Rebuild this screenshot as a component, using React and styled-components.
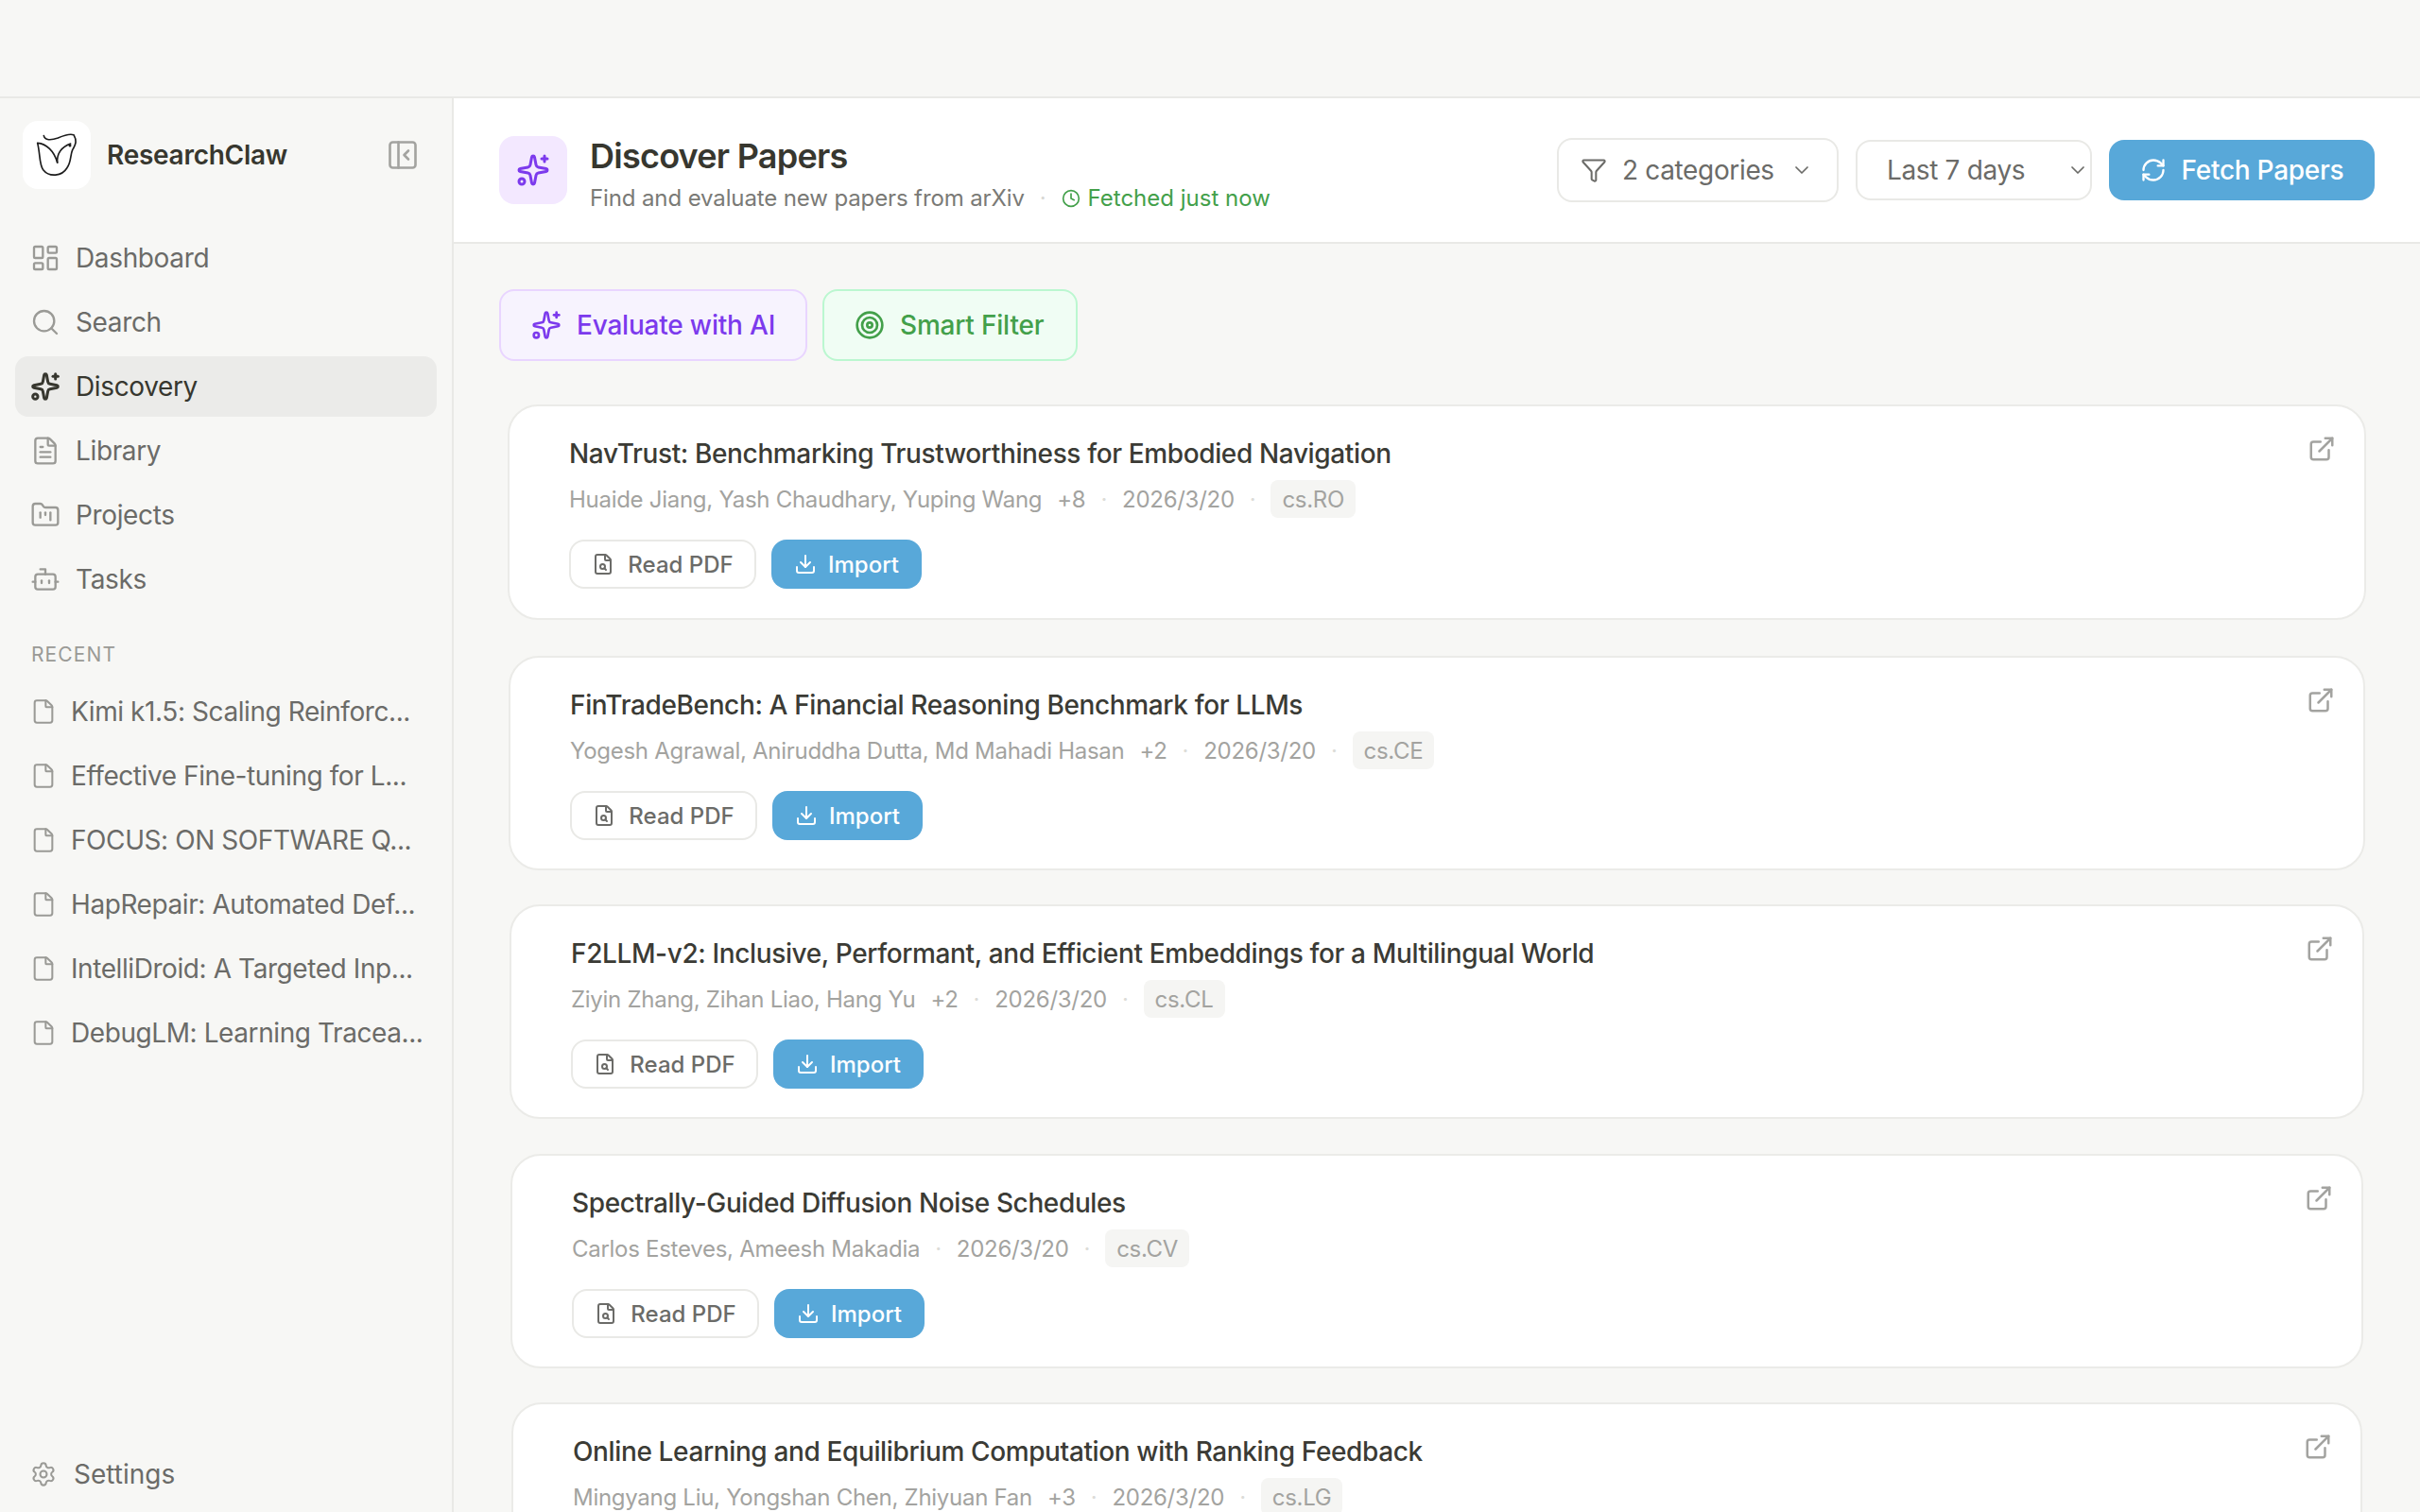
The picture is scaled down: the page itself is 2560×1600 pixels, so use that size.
import styled, { createGlobalStyle } from "styled-components";
import {
  LayoutDashboard,
  Search,
  Sparkles,
  FileText,
  FolderKanban,
  Bot,
  File,
  Settings,
  PanelLeftClose,
  Filter,
  ChevronDown,
  RefreshCw,
  Clock,
  Target,
  FileSearch,
  Download,
  ExternalLink,
} from "lucide-react";

const GlobalStyle = createGlobalStyle`
  html, body {
    margin: 0;
    padding: 0;
    height: 100%;
    overflow: hidden;
    background: #f7f7f5;
    font-family: Inter, "Liberation Sans", sans-serif;
  }
  * { box-sizing: border-box; }
`;

const Page = styled.div`
  height: 1600px;
  display: flex;
  flex-direction: column;
  overflow: hidden;
`;

const TitleBar = styled.div`
  height: 104px;
  flex: none;
  border-bottom: 2px solid #e9e9e6;
`;

const Body = styled.div`
  flex: 1;
  display: flex;
  min-height: 0;
`;

const Sidebar = styled.aside`
  width: 480px;
  flex: none;
  border-right: 2px solid #e9e9e6;
  display: flex;
  flex-direction: column;
  padding: 24px 16px 0;
`;

const Brand = styled.div`
  display: flex;
  align-items: center;
  height: 72px;
  padding-left: 8px;
  margin-bottom: 41px;
`;

const LogoBox = styled.div`
  width: 72px;
  height: 72px;
  border-radius: 16px;
  background: #fff;
  display: flex;
  margin-right: 17px;
`;

const BrandName = styled.div`
  flex: 1;
  font-size: 28px;
  font-weight: 600;
  letter-spacing: -0.27px;
  color: #37372f;
`;

const CollapseIcon = styled.div`
  display: flex;
  color: #a3a3a0;
  margin-right: 18px;
`;

const NavList = styled.nav`
  display: flex;
  flex-direction: column;
  gap: 4px;
`;

const NavItem = styled.div`
  height: 64px;
  display: flex;
  align-items: center;
  gap: 16px;
  padding-left: 16px;
  border-radius: 14px;
  font-size: 28px;
  letter-spacing: -0.36px;
  color: ${(p) => (p.$active ? "#37372f" : "#6b6b68")};
  background: ${(p) => (p.$active ? "#ebebe9" : "transparent")};
  svg {
    color: ${(p) => (p.$active ? "#37372f" : "#9a9a96")};
    flex: none;
  }
`;

const SectionLabel = styled.div`
  font-size: 21px;
  letter-spacing: 1.1px;
  color: #9a9a96;
  padding-left: 17px;
  margin: 35px 0 16px;
`;

const RecentItem = styled.div`
  height: 64px;
  display: flex;
  align-items: center;
  gap: 15px;
  padding-left: 16px;
  font-size: 28px;
  letter-spacing: -0.42px;
  color: #6b6b68;
  white-space: nowrap;
  svg {
    color: #9a9a96;
    flex: none;
  }
`;

const SettingsRow = styled.div`
  margin-top: auto;
  height: 64px;
  margin-bottom: 8px;
  display: flex;
  align-items: center;
  gap: 18px;
  padding-left: 16px;
  font-size: 28px;
  color: #6b6b68;
  svg {
    color: #9a9a96;
  }
`;

const Main = styled.main`
  flex: 1;
  min-width: 0;
  display: flex;
  flex-direction: column;
`;

const Header = styled.header`
  height: 154px;
  flex: none;
  background: #fff;
  border-bottom: 2px solid #e9e9e6;
  display: flex;
  align-items: center;
  padding: 0 48px;
`;

const HeaderIcon = styled.div`
  width: 72px;
  height: 72px;
  border-radius: 16px;
  background: #f3e8ff;
  color: #7c3aed;
  display: flex;
  align-items: center;
  justify-content: center;
  margin-right: 24px;
`;

const HeaderText = styled.div`
  flex: 1;
  padding-top: 8px;
`;

const PageTitle = styled.h1`
  margin: 0;
  font-size: 36px;
  line-height: 44px;
  font-weight: 600;
  letter-spacing: -0.76px;
  color: #37372f;
`;

const Subtitle = styled.div`
  display: flex;
  align-items: center;
  margin-top: 7px;
  font-size: 24px;
  line-height: 32px;
  letter-spacing: -0.12px;
  color: #7a7a76;
`;

const Dot = styled.span`
  color: #d8d8d4;
  margin: 0 16px;
`;

const Fetched = styled.span`
  display: inline-flex;
  align-items: center;
  gap: 8px;
  letter-spacing: 0;
  color: #43a04a;
`;

const FilterButton = styled.div`
  height: ${(p) => p.$h}px;
  width: ${(p) => p.$w}px;
  border: 2px solid #e9e9e6;
  border-radius: 16px;
  background: #fff;
  display: flex;
  align-items: center;
  padding-left: ${(p) => p.$pad}px;
  font-size: 28px;
  letter-spacing: -0.35px;
  color: #6b6b68;
  margin-right: 18px;
`;

const FilterLabel = styled.span`
  flex: 1;
`;

const PrimaryButton = styled.div`
  height: ${(p) => p.$h}px;
  width: ${(p) => p.$w}px;
  border-radius: 16px;
  background: #58a8d9;
  color: #fff;
  display: flex;
  align-items: center;
  justify-content: center;
  gap: ${(p) => p.$gap}px;
  font-size: ${(p) => p.$size}px;
  letter-spacing: ${(p) => p.$spacing || 0}px;
  font-weight: 500;
`;

const Content = styled.div`
  flex: 1;
  min-height: 0;
  padding: 48px 48px 0;
`;

const ActionRow = styled.div`
  display: flex;
  gap: 16px;
  margin-bottom: 46px;
`;

const ActionButton = styled.div`
  height: 76px;
  width: ${(p) => p.$w}px;
  border-radius: 16px;
  border: 2px solid ${(p) => p.$border};
  background: ${(p) => p.$bg};
  color: ${(p) => p.$color};
  display: flex;
  align-items: center;
  gap: 16px;
  padding-left: 32px;
  font-size: 28px;
  letter-spacing: -0.2px;
  font-weight: 500;
`;

const CardList = styled.div`
  display: flex;
  flex-direction: column;
`;

const Card = styled.article`
  position: relative;
  height: ${(p) => p.$h}px;
  flex: none;
  margin: 0 ${(p) => p.$inset}px ${(p) => p.$gap}px;
  background: #fff;
  border: 2px solid #ebebe8;
  border-radius: 32px;
  padding: 30px 62px 0 63px;
`;

const OpenLink = styled.div`
  position: absolute;
  top: 30px;
  right: 30px;
  display: flex;
  color: #a3a3a0;
`;

const CardTitle = styled.h2`
  margin: 0;
  font-size: 28px;
  line-height: 40px;
  font-weight: 500;
  letter-spacing: -0.37px;
  color: #3b3b35;
`;

const Meta = styled.div`
  display: flex;
  align-items: center;
  height: 40px;
  margin-top: 8px;
  font-size: 24px;
  letter-spacing: -0.28px;
  color: #a3a3a0;
  white-space: pre;
`;

const MetaDot = styled.span`
  color: #dcdcd8;
  margin: 0 16px;
`;

const Extra = styled.span`
  margin-left: 16px;
`;

const Tag = styled.span`
  height: 40px;
  display: flex;
  align-items: center;
  padding: 0 12px;
  border-radius: 8px;
  background: #f5f5f3;
`;

const CardActions = styled.div`
  display: flex;
  gap: 16px;
  margin-top: 23px;
`;

const ReadButton = styled.div`
  width: 198px;
  height: 52px;
  border: 2px solid #e9e9e6;
  border-radius: 16px;
  background: #fff;
  display: flex;
  align-items: center;
  justify-content: center;
  gap: 14px;
  font-size: 24px;
  font-weight: 500;
  color: #6b6b68;
`;

const Logo = () => (
  <svg width="72" height="72" viewBox="0 0 216 216" fill="none" stroke="#1c1c1c" strokeWidth="5" strokeLinecap="round" strokeLinejoin="round">
    <path d="M67 47C70 62 90 62 112 54C130 46 150 40 162 44C172 62 170 72 158 92C150 110 155 130 140 150C125 175 85 180 65 155C52 138 56 105 47 70C75 72 100 95 110 132" />
    <path d="M110 132C108 100 125 82 152 72" />
    <circle cx="150" cy="78" r="2" fill="#1c1c1c" />
  </svg>
);

const nav = [
  { label: "Dashboard", Icon: LayoutDashboard },
  { label: "Search", Icon: Search },
  { label: "Discovery", Icon: Sparkles, active: true },
  { label: "Library", Icon: FileText },
  { label: "Projects", Icon: FolderKanban },
  { label: "Tasks", Icon: Bot },
];

const recent = [
  "Kimi k1.5: Scaling Reinforc...",
  "Effective Fine-tuning for L...",
  "FOCUS: ON SOFTWARE Q...",
  "HapRepair: Automated Def...",
  "IntelliDroid: A Targeted Inp...",
  "DebugLM: Learning Tracea...",
];

const papers = [
  { title: "NavTrust: Benchmarking Trustworthiness for Embodied Navigation", authors: "Huaide Jiang, Yash Chaudhary, Yuping Wang", extra: "+8", tag: "cs.RO", inset: 9, h: 228, gap: 38 },
  { title: "FinTradeBench: A Financial Reasoning Benchmark for LLMs", authors: "Yogesh Agrawal, Aniruddha Dutta, Md Mahadi Hasan", extra: "+2", tag: "cs.CE", inset: 10, h: 227, gap: 36 },
  { title: "F2LLM-v2: Inclusive, Performant, and Efficient Embeddings for a Multilingual World", authors: "Ziyin Zhang, Zihan Liao, Hang Yu", extra: "+2", tag: "cs.CL", inset: 11, h: 227, gap: 37 },
  { title: "Spectrally-Guided Diffusion Noise Schedules", authors: "Carlos Esteves, Ameesh Makadia", tag: "cs.CV", inset: 12, h: 227, gap: 36 },
  { title: "Online Learning and Equilibrium Computation with Ranking Feedback", authors: "Mingyang Liu, Yongshan Chen, Zhiyuan Fan", extra: "+3", tag: "cs.LG", inset: 13, h: 227, gap: 36 },
];

const App = () => (
  <Page>
    <GlobalStyle />
    <TitleBar />
    <Body>
      <Sidebar>
        <Brand>
          <LogoBox>
            <Logo />
          </LogoBox>
          <BrandName>ResearchClaw</BrandName>
          <CollapseIcon>
            <PanelLeftClose size={36} strokeWidth={1.75} />
          </CollapseIcon>
        </Brand>
        <NavList>
          {nav.map(({ label, Icon, active }) => (
            <NavItem key={label} $active={active}>
              <Icon size={32} strokeWidth={active ? 2.25 : 1.75} />
              {label}
            </NavItem>
          ))}
        </NavList>
        <SectionLabel>RECENT</SectionLabel>
        <NavList>
          {recent.map((item) => (
            <RecentItem key={item}>
              <File size={28} strokeWidth={1.75} />
              {item}
            </RecentItem>
          ))}
        </NavList>
        <SettingsRow>
          <Settings size={28} strokeWidth={1.75} />
          Settings
        </SettingsRow>
      </Sidebar>
      <Main>
        <Header>
          <HeaderIcon>
            <Sparkles size={36} strokeWidth={2} />
          </HeaderIcon>
          <HeaderText>
            <PageTitle>Discover Papers</PageTitle>
            <Subtitle>
              Find and evaluate new papers from arXiv
              <Dot>·</Dot>
              <Fetched>
                <Clock size={20} strokeWidth={2} />
                Fetched just now
              </Fetched>
            </Subtitle>
          </HeaderText>
          <FilterButton $w={298} $h={68} $pad={23}>
            <Filter size={28} strokeWidth={1.75} style={{ marginRight: 16 }} />
            <FilterLabel>2 categories</FilterLabel>
            <ChevronDown size={24} strokeWidth={1.75} style={{ marginRight: 25 }} />
          </FilterButton>
          <FilterButton $w={250} $h={64} $pad={31}>
            <FilterLabel>Last 7 days</FilterLabel>
            <ChevronDown size={24} strokeWidth={1.75} style={{ marginRight: 1 }} />
          </FilterButton>
          <PrimaryButton $w={281} $h={64} $gap={16} $size={28} $spacing={-0.27}>
            <RefreshCw size={28} strokeWidth={2} />
            Fetch Papers
          </PrimaryButton>
        </Header>
        <Content>
          <ActionRow>
            <ActionButton $w={326} $border="#e9d5ff" $bg="#f7f3fe" $color="#7c3aed">
              <Sparkles size={32} strokeWidth={2} />
              Evaluate with AI
            </ActionButton>
            <ActionButton $w={270} $border="#bbf7d0" $bg="#f0fdf4" $color="#43a04a">
              <Target size={32} strokeWidth={2} />
              Smart Filter
            </ActionButton>
          </ActionRow>
          <CardList>
            {papers.map((paper) => (
              <Card key={paper.title} $inset={paper.inset} $h={paper.h} $gap={paper.gap}>
                <OpenLink>
                  <ExternalLink size={30} strokeWidth={2} />
                </OpenLink>
                <CardTitle>{paper.title}</CardTitle>
                <Meta>
                  {paper.authors}
                  {paper.extra && <Extra>{paper.extra}</Extra>}
                  <MetaDot>·</MetaDot>
                  2026/3/20
                  <MetaDot>·</MetaDot>
                  <Tag>{paper.tag}</Tag>
                </Meta>
                <CardActions>
                  <ReadButton>
                    <FileSearch size={24} strokeWidth={2} />
                    Read PDF
                  </ReadButton>
                  <PrimaryButton $w={159} $h={52} $gap={12} $size={24}>
                    <Download size={24} strokeWidth={2} />
                    Import
                  </PrimaryButton>
                </CardActions>
              </Card>
            ))}
          </CardList>
        </Content>
      </Main>
    </Body>
  </Page>
);

export default App;
